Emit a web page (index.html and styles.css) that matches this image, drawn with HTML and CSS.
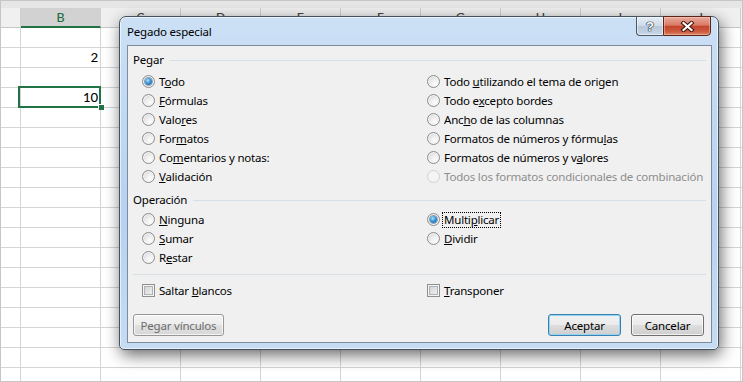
FILE: index.html
```html
<!DOCTYPE html>
<html lang="es">
<head>
    <meta charset="UTF-8">
    <meta name="viewport" content="width=device-width, initial-scale=1.0">
    <title>Pegado especial</title>
    <link rel="stylesheet" href="styles.css">
</head>
<body>
    <div class="sheet">
        <div class="band"></div>
        <div class="col-heads">
            <div class="head col-a"></div>
            <div class="head active">B</div>
            <div class="head">C</div>
            <div class="head">D</div>
            <div class="head">E</div>
            <div class="head">F</div>
            <div class="head">G</div>
            <div class="head">H</div>
            <div class="head">I</div>
            <div class="head">J</div>
        </div>
        <div class="cells">
            <div class="row"></div>
            <div class="row"><div class="cell">2</div></div>
            <div class="row"></div>
            <div class="row"><div class="cell selected">10</div></div>
        </div>
    </div>

    <div class="dialog">
        <div class="titlebar">
            <span class="title">Pegado especial</span>
            <div class="caption-buttons">
                <span class="cap-btn help">?</span>
                <span class="cap-btn close">
                    <svg width="15" height="11" viewBox="0 0 15 11">
                        <path d="M3.5 2 L11.5 9 M11.5 2 L3.5 9" stroke="#3c1208" stroke-width="4.2" stroke-linecap="square"/>
                        <path d="M3.5 2 L11.5 9 M11.5 2 L3.5 9" stroke="#fff" stroke-width="2.2" stroke-linecap="square"/>
                    </svg>
                </span>
            </div>
        </div>

        <div class="client">
            <div class="group-title">Pegar</div>
            <div class="options six">
                <label class="opt"><span class="radio on"></span><span>T<u>o</u>do</span></label>
                <label class="opt"><span class="radio"></span><span><u>F</u>órmulas</span></label>
                <label class="opt"><span class="radio"></span><span>Valo<u>r</u>es</span></label>
                <label class="opt"><span class="radio"></span><span>For<u>m</u>atos</span></label>
                <label class="opt"><span class="radio"></span><span>Co<u>m</u>entarios y notas:</span></label>
                <label class="opt"><span class="radio"></span><span><u>V</u>alidación</span></label>
                <label class="opt"><span class="radio"></span><span>Todo <u>u</u>tilizando el tema de origen</span></label>
                <label class="opt"><span class="radio"></span><span>Todo e<u>x</u>cepto bordes</span></label>
                <label class="opt"><span class="radio"></span><span>Anc<u>h</u>o de las columnas</span></label>
                <label class="opt"><span class="radio"></span><span>Formatos de números y fórmu<u>l</u>as</span></label>
                <label class="opt"><span class="radio"></span><span>Formatos de números y v<u>a</u>lores</span></label>
                <label class="opt disabled"><span class="radio off"></span><span>Todos los formatos condicionales de combinación</span></label>
            </div>

            <div class="group-title op">Operación</div>
            <div class="options three">
                <label class="opt"><span class="radio"></span><span><u>N</u>inguna</span></label>
                <label class="opt"><span class="radio"></span><span><u>S</u>umar</span></label>
                <label class="opt"><span class="radio"></span><span>R<u>e</u>star</span></label>
                <label class="opt"><span class="radio on"></span><span class="focus">Multi<u>p</u>licar</span></label>
                <label class="opt"><span class="radio"></span><span><u>D</u>ividir</span></label>
            </div>

            <div class="separator"></div>

            <div class="options one">
                <label class="opt"><span class="check"></span><span>Saltar <u>b</u>lancos</span></label>
                <label class="opt"><span class="check"></span><span><u>T</u>ransponer</span></label>
            </div>

            <div class="buttons">
                <button class="btn wide" disabled>Pegar vínculos</button>
                <div class="right">
                    <button class="btn default">Aceptar</button>
                    <button class="btn">Cancelar</button>
                </div>
            </div>
        </div>
    </div>
</body>
</html>
```

FILE: styles.css
```css
body {
    margin: 0;
    font-family: "Noto Sans", "Open Sans", sans-serif;
    background-color: #fff;
}

/* spreadsheet behind the dialog */
.sheet {
    width: 743px;
    height: 382px;
    box-sizing: border-box;
    border: 1px solid #c6c6c6;
    overflow: hidden;
    background-color: #fff;
    font-family: Carlito, Lato, "Liberation Sans", sans-serif;
}

.band {
    height: 7px;
    background-color: #e6e6e6;
}

.col-heads {
    display: flex;
    height: 20px;
    background-color: #f0f0f0;
}

.head {
    flex: none;
    width: 80px;
    box-sizing: border-box;
    border-right: 1px solid #d0d0d0;
    border-bottom: 1px solid #c8c8c8;
    text-align: center;
    font-size: 15px;
    line-height: 19px;
    color: #444;
}

.head.col-a {
    width: 20px;
}

.head.active {
    background-color: #d2d2d2;
    color: #1f6b41;
    border-bottom: 2px solid #217346;
    line-height: 18px;
}

.cells {
    height: 360px;
    background:
        linear-gradient(to right, #d4d4d4 1px, transparent 1px) 19px 0 / 80px 100% repeat-x,
        linear-gradient(to top, #d4d4d4 1px, transparent 1px) 0 0 / 100% 20px repeat-y;
}

.row {
    height: 20px;
    padding-left: 20px;
}

.cell {
    width: 80px;
    height: 19px;
    box-sizing: border-box;
    padding-right: 3px;
    text-align: right;
    font-size: 15px;
    line-height: 19px;
    color: #000;
}

.cell.selected {
    position: relative;
}

.cell.selected::before {
    content: '';
    position: absolute;
    left: -3px;
    top: -2px;
    right: 0;
    bottom: -1px;
    border: 2px solid #217346;
}

.cell.selected::after {
    content: '';
    position: absolute;
    right: -3px;
    bottom: -3px;
    width: 5px;
    height: 5px;
    background-color: #217346;
    box-shadow: -1px -1px 0 #fff;
}

/* dialog window */
.dialog {
    position: absolute;
    left: 119px;
    top: 16px;
    width: 600px;
    height: 334px;
    box-sizing: border-box;
    padding: 0 6px 6px 7px;
    border: 1px solid #44525f;
    border-radius: 7px 7px 5px 5px;
    background: linear-gradient(to bottom, #cce0f5 0%, #c0d8f2 30%, #b6d2f0 60%, #c6dcf3 100%);
    box-shadow: 2px 5px 16px rgba(0, 0, 0, 0.6), inset 0 0 0 1px rgba(255, 255, 255, 0.6);
    display: flex;
    flex-direction: column;
}

.titlebar {
    height: 28px;
    display: flex;
    align-items: flex-start;
    justify-content: space-between;
}

.title {
    margin-top: 7px;
    font-size: 11.5px;
    letter-spacing: -0.2px;
    line-height: 16px;
    color: #000;
}

.caption-buttons {
    display: flex;
    margin-top: -1px;
    margin-right: 1px;
}

.cap-btn {
    height: 20px;
    box-sizing: border-box;
    display: flex;
    align-items: center;
    justify-content: center;
    border: 1px solid #4b5866;
}

.help {
    width: 27px;
    border-right: none;
    border-radius: 0 0 0 4px;
    background: linear-gradient(to bottom, #e5edf6 0%, #cfdbe8 48%, #b7c8da 52%, #c7d6e6 100%);
    box-shadow: inset 0 0 0 1px rgba(255, 255, 255, 0.5);
    font: bold 13px "Liberation Sans", sans-serif;
    color: #fff;
    text-shadow: 0 0 1px #1d2b3a, 0 0 1px #1d2b3a, 0 0 1px #1d2b3a, 0 0 1px #1d2b3a;
}

.close {
    width: 48px;
    border-color: #5b2419;
    border-radius: 0 0 4px 0;
    background: linear-gradient(to bottom, #e8ab9c 0%, #d97b66 45%, #c2462d 52%, #cc5a3f 80%, #dc8464 100%);
    box-shadow: inset 0 0 0 1px rgba(255, 210, 200, 0.45);
}

.client {
    width: 585px;
    height: 298px;
    box-sizing: border-box;
    border: 1px solid #7d8c9c;
    background-color: #f0f0f0;
    padding: 6px 5px 0 5px;
    font-size: 11.5px;
    letter-spacing: -0.2px;
    color: #000;
}

.group-title {
    display: flex;
    align-items: center;
    gap: 6px;
    height: 16px;
    line-height: 16px;
}

.group-title::after {
    content: '';
    flex: 1;
    height: 1px;
    background-color: #d5dfe5;
}

.group-title.op {
    margin-top: 6px;
}

.options {
    display: grid;
    grid-template-columns: 285px 1fr;
    grid-auto-flow: column;
    grid-auto-rows: 19px;
    padding-left: 9px;
}

.options.six {
    grid-template-rows: repeat(6, 19px);
    margin-top: 4px;
}

.options.three {
    grid-template-rows: repeat(3, 19px);
    margin-top: 2px;
}

.options.one {
    grid-template-rows: 19px;
    margin-top: 6px;
}

.opt {
    display: flex;
    align-items: center;
    gap: 4px;
    white-space: nowrap;
}

.opt u {
    text-underline-offset: 1px;
}

.opt.disabled {
    color: #8d8d8d;
}

.radio {
    position: relative;
    flex: none;
    width: 13px;
    height: 13px;
    box-sizing: border-box;
    border: 1px solid #8b8c8c;
    border-radius: 50%;
    background: radial-gradient(circle at 65% 70%, #fdfdfd 0%, #ececec 45%, #cacaca 100%);
    box-shadow: inset 0 0 0 1px #f6f6f6;
}

.radio.on::after {
    content: '';
    position: absolute;
    left: 2px;
    top: 2px;
    width: 7px;
    height: 7px;
    border-radius: 50%;
    background: radial-gradient(circle at 40% 35%, #b4e2fb 0%, #3a95d6 45%, #11538c 100%);
    box-shadow: 0 0 0 1px rgba(30, 70, 110, 0.45);
}

.radio.off {
    border-color: #d2d2d2;
    background: #f4f4f4;
    box-shadow: none;
}

.focus {
    margin-left: -2px;
    padding: 0 1px;
    border: 1px dotted #000;
    line-height: 14px;
}

.separator {
    height: 1px;
    margin-top: 7px;
    background-color: #d5dfe5;
}

.check {
    flex: none;
    width: 13px;
    height: 13px;
    box-sizing: border-box;
    border: 1px solid #8e8f8f;
    background: linear-gradient(135deg, #cdcdcd 0%, #f6f6f6 100%);
    box-shadow: inset 0 0 0 1px #f4f4f4, inset 0 0 0 2px #aeb3b9;
}

.buttons {
    display: flex;
    justify-content: space-between;
    margin-top: 14px;
}

.buttons .right {
    display: flex;
    gap: 10px;
    margin-right: 2px;
}

.btn {
    width: 73px;
    height: 22px;
    box-sizing: border-box;
    padding: 0;
    font-family: "Noto Sans", "Open Sans", sans-serif;
    font-size: 11.5px;
    letter-spacing: -0.2px;
    color: #000;
    border: 1px solid #707070;
    border-radius: 3px;
    background: linear-gradient(to bottom, #f2f2f2 0%, #ebebeb 49%, #dddddd 51%, #cfcfcf 100%);
    box-shadow: inset 0 0 0 1px rgba(255, 255, 255, 0.7);
}

.btn.wide {
    width: 91px;
}

.btn.default {
    border-color: #3c7fb1;
    box-shadow: inset 0 0 0 1px #8fd6f5;
}

.btn:disabled {
    color: #6d6d6d;
    border-color: #979797;
    background: linear-gradient(to bottom, #f4f4f4 0%, #ececec 49%, #e0e0e0 51%, #d8d8d8 100%);
}
```
